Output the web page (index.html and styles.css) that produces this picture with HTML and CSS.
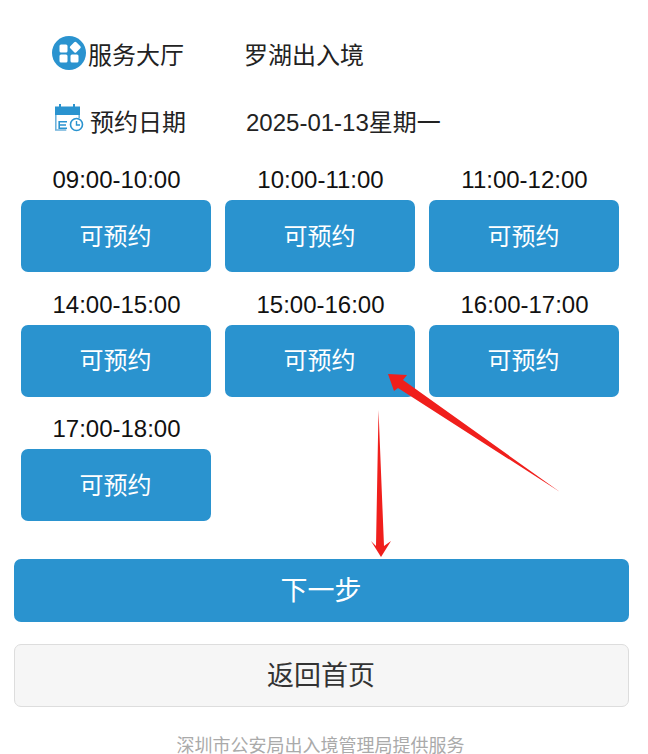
FILE: index.html
```html
<!DOCTYPE html>
<html lang="zh-CN">
<head>
<meta charset="utf-8">
<title>预约</title>
<link rel="stylesheet" href="styles.css">
</head>
<body>
<main class="page">
  <section class="info">
    <div class="info-row">
      <div class="info-label">
        <svg class="hall-icon" viewBox="0 0 34 34" aria-hidden="true">
          <circle cx="17" cy="17" r="17" fill="#2a93cf"/>
          <rect x="7.5" y="8.5" width="8" height="8" rx="1.5" fill="#fff"/>
          <rect x="19" y="7" width="8.6" height="8.6" rx="1.5" fill="#fff" transform="rotate(45 23.3 11.3)"/>
          <rect x="7.5" y="18.5" width="8" height="8" rx="1.5" fill="#fff"/>
          <rect x="18.5" y="18.5" width="8" height="8" rx="1.5" fill="#fff"/>
        </svg>
        <span>服务大厅</span>
      </div>
      <span class="info-value">罗湖出入境</span>
    </div>
    <div class="info-row">
      <div class="info-label">
        <svg class="date-icon" viewBox="0 0 30 30" aria-hidden="true">
          <path d="M1 3.5h4V1h2v2.5h12V1h2v2.5h5V12H1z" fill="#2a93cf"/>
          <path d="M1.8 12v15h10.5" fill="none" stroke="#6fb3dc" stroke-width="1.6"/>
          <path d="M25.2 12v3" fill="none" stroke="#6fb3dc" stroke-width="1.6"/>
          <path d="M13 18.8H5.2V25.2H13M5.2 22H12" stroke="#2a93cf" stroke-width="1.6" fill="none"/>
          <circle cx="22.5" cy="21.5" r="6" fill="#fff" stroke="#2a93cf" stroke-width="1.6"/>
          <path d="M22.5 18V22H26" fill="none" stroke="#2a93cf" stroke-width="1.4"/>
        </svg>
        <span>预约日期</span>
      </div>
      <span class="info-value">2025-01-13星期一</span>
    </div>
  </section>

  <section class="slots">
    <div class="slot"><div class="slot-time">09:00-10:00</div><button class="slot-btn">可预约</button></div>
    <div class="slot"><div class="slot-time">10:00-11:00</div><button class="slot-btn">可预约</button></div>
    <div class="slot"><div class="slot-time">11:00-12:00</div><button class="slot-btn">可预约</button></div>
    <div class="slot"><div class="slot-time">14:00-15:00</div><button class="slot-btn">可预约</button></div>
    <div class="slot"><div class="slot-time">15:00-16:00</div><button class="slot-btn">可预约</button></div>
    <div class="slot"><div class="slot-time">16:00-17:00</div><button class="slot-btn">可预约</button></div>
    <div class="slot"><div class="slot-time">17:00-18:00</div><button class="slot-btn">可预约</button></div>
  </section>

  <section class="actions">
    <button class="action action-primary">下一步</button>
    <button class="action action-secondary">返回首页</button>
  </section>

  <footer class="footer">深圳市公安局出入境管理局提供服务</footer>

  <svg class="arrows" viewBox="0 0 648 754" aria-hidden="true">
    <polygon points="388,374 407,375 403,380 560,492 398,388 394,391" fill="#f01f1c"/>
    <polygon points="378.5,410 384,546 391,541 381,557 371,541 376,546" fill="#f01f1c"/>
  </svg>
</main>
</body>
</html>
```

FILE: styles.css
```css
* { box-sizing: border-box; }
html, body { margin: 0; padding: 0; background: #fff; }
body {
  font-family: "Liberation Sans", "Noto Sans CJK SC", sans-serif;
  color: #222;
}
.page {
  position: relative;
  width: 648px;
  height: 754px;
  overflow: hidden;
  padding-top: 20px;
}
.info-row {
  display: flex;
  align-items: center;
  height: 67px;
  font-size: 24px;
}
.info-label {
  display: flex;
  align-items: center;
  width: 244px;
  padding-left: 52px;
}
.hall-icon {
  width: 34px;
  height: 34px;
  margin: -2px 2px 0 0;
}
.date-icon {
  width: 30px;
  height: 30px;
  margin: -6px 6px 0 2px;
}
.info-row:nth-child(2) .info-value { padding-left: 2px; }
.slots {
  display: grid;
  grid-template-columns: repeat(3, 190px);
  column-gap: 14px;
  row-gap: 20.5px;
  padding-left: 21px;
  margin-top: 14px;
}
.slot-time {
  height: 24px;
  line-height: 24px;
  margin-bottom: 8px;
  padding-left: 1px;
  font-size: 24px;
  text-align: center;
  color: #111;
}
.slot-btn {
  display: block;
  width: 100%;
  height: 72px;
  padding: 0 1px 4px 0;
  border: 0;
  border-radius: 7px;
  background: #2a93cf;
  color: #fff;
  font: inherit;
  font-size: 24px;
}
.actions {
  display: flex;
  flex-direction: column;
  gap: 22px;
  margin: 38px 19px 0 14px;
}
.action {
  display: block;
  width: 100%;
  height: 63px;
  padding: 0 1px 4px 0;
  border-radius: 7px;
  font: inherit;
  font-size: 27px;
}
.action-primary {
  border: 0;
  background: #2a93cf;
  color: #fff;
}
.action-secondary {
  border: 1px solid #ddd;
  background: #f6f6f6;
  color: #333;
}
.footer {
  margin: 29px 21px 0 14px;
  font-size: 18px;
  line-height: 20px;
  text-align: center;
  color: #aaa;
}
.arrows {
  position: absolute;
  left: 0;
  top: 0;
  width: 648px;
  height: 754px;
  pointer-events: none;
}
```
